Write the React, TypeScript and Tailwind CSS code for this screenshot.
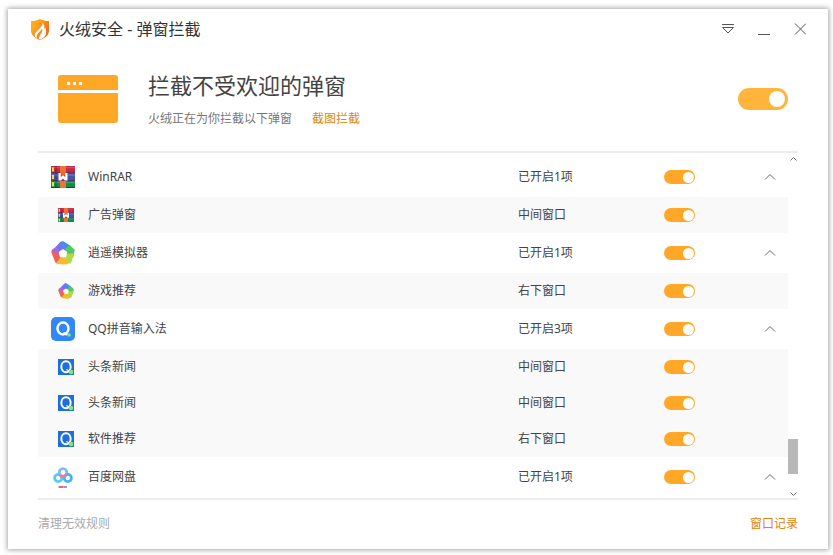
import { useState } from 'react';
import clsx from 'clsx';

type IconKind = 'winrar' | 'xiaoyao' | 'qq' | 'baidu';

interface Rule {
  id: number;
  icon: IconKind;
  name: string;
  status: string;
  child?: boolean;
}

const rules: Rule[] = [
  { id: 1, icon: 'winrar', name: 'WinRAR', status: '已开启1项' },
  { id: 2, icon: 'winrar', name: '广告弹窗', status: '中间窗口', child: true },
  { id: 3, icon: 'xiaoyao', name: '逍遥模拟器', status: '已开启1项' },
  { id: 4, icon: 'xiaoyao', name: '游戏推荐', status: '右下窗口', child: true },
  { id: 5, icon: 'qq', name: 'QQ拼音输入法', status: '已开启3项' },
  { id: 6, icon: 'qq', name: '头条新闻', status: '中间窗口', child: true },
  { id: 7, icon: 'qq', name: '头条新闻', status: '中间窗口', child: true },
  { id: 8, icon: 'qq', name: '软件推荐', status: '右下窗口', child: true },
  { id: 9, icon: 'baidu', name: '百度网盘', status: '已开启1项' },
];

function ShieldLogo() {
  return (
    <svg viewBox="0 0 18 21" className="w-[18px] h-[21px]" aria-hidden="true">
      <defs>
        <linearGradient id="shield" x1="0" y1="0" x2="1" y2="0.6">
          <stop offset="0" stopColor="#ffb81c" />
          <stop offset="0.5" stopColor="#fd971c" />
          <stop offset="1" stopColor="#ee6a14" />
        </linearGradient>
      </defs>
      <path d="M9 0c2.5 1.500 5.500 2 9 2v9.500c0 4.500-3.500 7.500-9 9.500-5.500-2-9-5-9-9.500V2c3.500 0 6.500-.5 9-2z" fill="url(#shield)" />
      <path d="M11.500 3.800c.3 2.800-1.500 4.500-3.800 6.700C5.300 12.800 3.200 14.600 4 17.500c.4.500 1 1 1.600 1.300 0-2.800 1.200-4.300 3-6 1.400-1.300 2.100-2.300 2.300-3.600.9 1.800.5 3.300-.6 5-1.200 1.900-2.300 3.300-2.500 5.600l1.200.8c3.500-1.500 5.500-3.500 6-6.200.4-2.200-.4-3.600-.2-5.600-.6.500-1 1-1.200 1.600 0-2.700-.3-4.900-2.100-6.600z" fill="#fff" />
    </svg>
  );
}

function PopupIcon() {
  return (
    <svg viewBox="0 0 60 48" className="w-[60px] h-12" aria-hidden="true">
      <path d="M3 0h54a3 3 0 0 1 3 3v12H0V3a3 3 0 0 1 3-3zM0 18h60v27a3 3 0 0 1-3 3H3a3 3 0 0 1-3-3z" fill="#ffa726" />
      <path d="M9 7h3v3H9zM15 7h3v3h-3zM21 7h3v3h-3z" fill="#fff" />
    </svg>
  );
}

function WinRarIcon() {
  return (
    <svg viewBox="0 0 24 22" className="w-full" aria-hidden="true">
      <path d="M0 0h24v7.300H0z" fill="#c42a48" />
      <path d="M0 7.300h24v7.300H0z" fill="#4a52b0" />
      <path d="M0 14.600h24V22H0z" fill="#158a48" />
      <path d="M0 1h24v1.200H0z" fill="#dc4864" />
      <path d="M0 8.500h24v1.200H0z" fill="#6c76d0" />
      <path d="M0 16h24v1.200H0z" fill="#2eaa62" />
      <path d="M0 6.600h24v.8H0zM0 13.900h24v.8H0zM0 21.200h24v.8H0z" fill="#32264a" />
      <path d="M1 1.500h2v4H1zM1 9h2v4H1zM1 16.300h2v4H1z" fill="#ffdc3c" />
      <path d="M4.500 0h1v22h-1z" fill="#281e32" opacity="0.500" />
      <path d="M9 0h6v22H9z" fill="#ec7434" />
      <path d="M7 7h10v8H7z" fill="#7a3a5c" />
      <path d="M9.500 4.500h5V9h-5z" fill="#f0682c" />
      <path d="M7.500 7h2.300v4.500l1.200-2h2l1.200 2V7h2.300v7.500h-2.700L12 12.500l-1.800 2H7.500z" fill="#fff" />
    </svg>
  );
}

function XiaoyaoIcon() {
  return (
    <svg viewBox="0 0 24 24" className="w-full" aria-hidden="true">
      <g strokeLinejoin="round" strokeWidth="1.500">
        <path d="M10 1.200 12 1 19 5.500 17 10 8 9 7.500 4z" fill="#4a8af0" stroke="#4a8af0" />
        <path d="M18.500 5 23 9 21.500 16 15.500 15 15 8z" fill="#52c860" stroke="#52c860" />
        <path d="M22 13 19.500 21.500 12 22.500 11 17 16.500 13.500z" fill="#b4d840" stroke="#b4d840" />
        <path d="M16 22.700 6 22.200 3.500 16 8 13.500 13 17.500z" fill="#fcb630" stroke="#fcb630" />
        <path d="M5 21 1 11 4 8 8.500 10 9 16z" fill="#f26058" stroke="#f26058" />
        <path d="M1.200 9.500 7 5 9.500 9 8 12.500z" fill="#a868e0" stroke="#a868e0" />
        <path d="M6 5.500 10.500 2 12.500 7.500 9 9.500z" fill="#6c78f0" stroke="#6c78f0" />
      </g>
      <path d="M12 9 15.500 11.300 14.500 15.500H9.500L8.500 11.300z" fill="#fff" stroke="#fff" strokeWidth="1.500" strokeLinejoin="round" />
    </svg>
  );
}

function QqIcon({ small }: { small?: boolean }) {
  return (
    <svg viewBox="0 0 24 24" className="w-full" aria-hidden="true">
      <rect width="24" height="24" rx={small ? 0 : 5} fill={small ? '#1c6fdc' : '#3187f7'} />
      <ellipse cx="12" cy="11.500" rx={small ? 7 : 5.500} ry={small ? 8.2 : 6} fill="none" stroke="#fff" strokeWidth={small ? 3 : 2.400} />
      <path d="M12.500 16c1.500.2 2.500.8 3.500 2" fill="none" stroke="#fff" strokeWidth="2" />
      <circle cx={small ? 19.500 : 18} cy={small ? 19.500 : 18} r={small ? 3.500 : 1.800} fill="#8bea63" />
    </svg>
  );
}

function BaiduIcon() {
  return (
    <svg viewBox="0 0 24 24" className="w-full" aria-hidden="true">
      <g fill="none" strokeWidth="2.800">
        <circle cx="12" cy="7.500" r="3.800" stroke="#84bce8" />
        <circle cx="7.200" cy="13" r="3.600" stroke="#54cdf6" />
        <circle cx="16.800" cy="13" r="3.600" stroke="#44b4f0" />
        <path d="M8.800 9.500c.6 1.400 1.800 2 3.200 2s2.600-.6 3.200-2" stroke="#f07c94" />
      </g>
      <path d="M7.500 22h5" stroke="#f0607c" strokeWidth="2" />
      <path d="M12.500 22H16" stroke="#8c9cdc" strokeWidth="2" />
    </svg>
  );
}

function AppIcon({ kind, small }: { kind: IconKind; small?: boolean }) {
  return (
    <span className={clsx('block mx-auto', small ? 'w-4' : 'w-6')}>
      {kind === 'winrar' && <WinRarIcon />}
      {kind === 'xiaoyao' && <XiaoyaoIcon />}
      {kind === 'qq' && <QqIcon small={small} />}
      {kind === 'baidu' && <BaiduIcon />}
    </span>
  );
}

function Chevron({ className, down }: { className: string; down?: boolean }) {
  return (
    <svg viewBox="0 0 12 6" className={className} fill="none" stroke="currentColor" aria-hidden="true">
      <path d={down ? 'M1 .5l5 5 5-5' : 'M1 5.500l5-5 5 5'} vectorEffect="non-scaling-stroke" />
    </svg>
  );
}

function Switch({ label, large }: { label: string; large?: boolean }) {
  const [on, setOn] = useState(true);
  return (
    <input
      type="checkbox"
      role="switch"
      aria-label={label}
      checked={on}
      onChange={(e) => setOn(e.target.checked)}
      className={clsx(
        'appearance-none flex items-center rounded-full cursor-pointer bg-gray-300 before:rounded-full before:bg-white checked:justify-end',
        large
          ? 'w-[50px] h-[22px] px-[3px] before:size-4 checked:bg-[#ffb43c]'
          : 'w-[31px] h-[14px] px-px before:size-[11px] checked:bg-[#ffa726]'
      )}
    />
  );
}

export default function App() {
  return (
    <div className="min-h-screen bg-white pt-[9px] pl-2 pr-[5px] pb-[6px] font-['Noto_Sans','Noto_Sans_CJK_SC',sans-serif] text-xs text-[#444]">
      <main className="bg-white shadow-[0_0_5px_1px_rgba(0,0,0,0.35)]">
        <header className="flex items-center h-10 pl-[23px] pr-[22px]">
          <ShieldLogo />
          <h1 className="ml-[10px] text-base text-[#333]">火绒安全 - 弹窗拦截</h1>
          <div className="flex gap-6 ml-auto text-[#555]">
            <button aria-label="菜单" className="size-3">
              <svg viewBox="0 0 12 12" fill="none" stroke="currentColor">
                <path d="M0 1.500h12M.5 4.500h11l-5.500 5.500z" />
              </svg>
            </button>
            <button aria-label="最小化" className="size-3">
              <svg viewBox="0 0 12 12" fill="none" stroke="currentColor">
                <path d="M0 11.500h12" />
              </svg>
            </button>
            <button aria-label="关闭" className="size-3">
              <svg viewBox="0 0 12 12" fill="none" stroke="currentColor">
                <path d="M1 .5l11 11M12 .5l-11 11" />
              </svg>
            </button>
          </div>
        </header>

        <section className="flex items-center h-[102px] pb-[2px] pl-[50px] pr-10">
          <PopupIcon />
          <div className="ml-[30px]">
            <h2 className="text-[22px] leading-8 text-[#444]">拦截不受欢迎的弹窗</h2>
            <p className="flex gap-5 mt-2 leading-5 text-[#777]">
              火绒正在为你拦截以下弹窗
              <a href="#capture" className="text-[#e08608]">截图拦截</a>
            </p>
          </div>
          <div className="ml-auto">
            <Switch label="弹窗拦截" large />
          </div>
        </section>

        <section className="flex mx-[30px] border-y-2 border-[#ececec]">
          <table className="flex-1 table-fixed mt-1 mb-px">
            <colgroup>
              <col className="w-[50px]" />
              <col />
              <col className="w-[146px]" />
              <col className="w-[100px]" />
              <col className="w-6" />
            </colgroup>
            <tbody>
              {rules.map((rule) => (
                <tr key={rule.id} className={rule.child ? 'h-9 bg-[#f9f9f9]' : 'h-10'}>
                  <td className={rule.child ? 'pl-[6px]' : ''}>
                    <AppIcon kind={rule.icon} small={rule.child} />
                  </td>
                  <td>{rule.name}</td>
                  <td>{rule.status}</td>
                  <td><Switch label={rule.name} /></td>
                  <td>
                    {!rule.child && (
                      <button aria-label={`收起${rule.name}`} className="block text-[#666]">
                        <Chevron className="w-3 h-[6px]" />
                      </button>
                    )}
                  </td>
                </tr>
              ))}
            </tbody>
          </table>
          <div className="flex flex-col items-center w-[10px] pt-1 pb-[2px] text-[#666]">
            <Chevron className="w-[7px] h-1" />
            <div className="w-full h-[35px] mt-auto mb-[18px] bg-[#b8b8b8]" />
            <Chevron className="w-[7px] h-1" down />
          </div>
        </section>

        <footer className="flex items-center justify-between h-[49px] pb-[2px] px-[30px]">
          <button className="text-[#aaa]">清理无效规则</button>
          <a href="#records" className="text-[#e08608]">窗口记录</a>
        </footer>
      </main>
    </div>
  );
}
